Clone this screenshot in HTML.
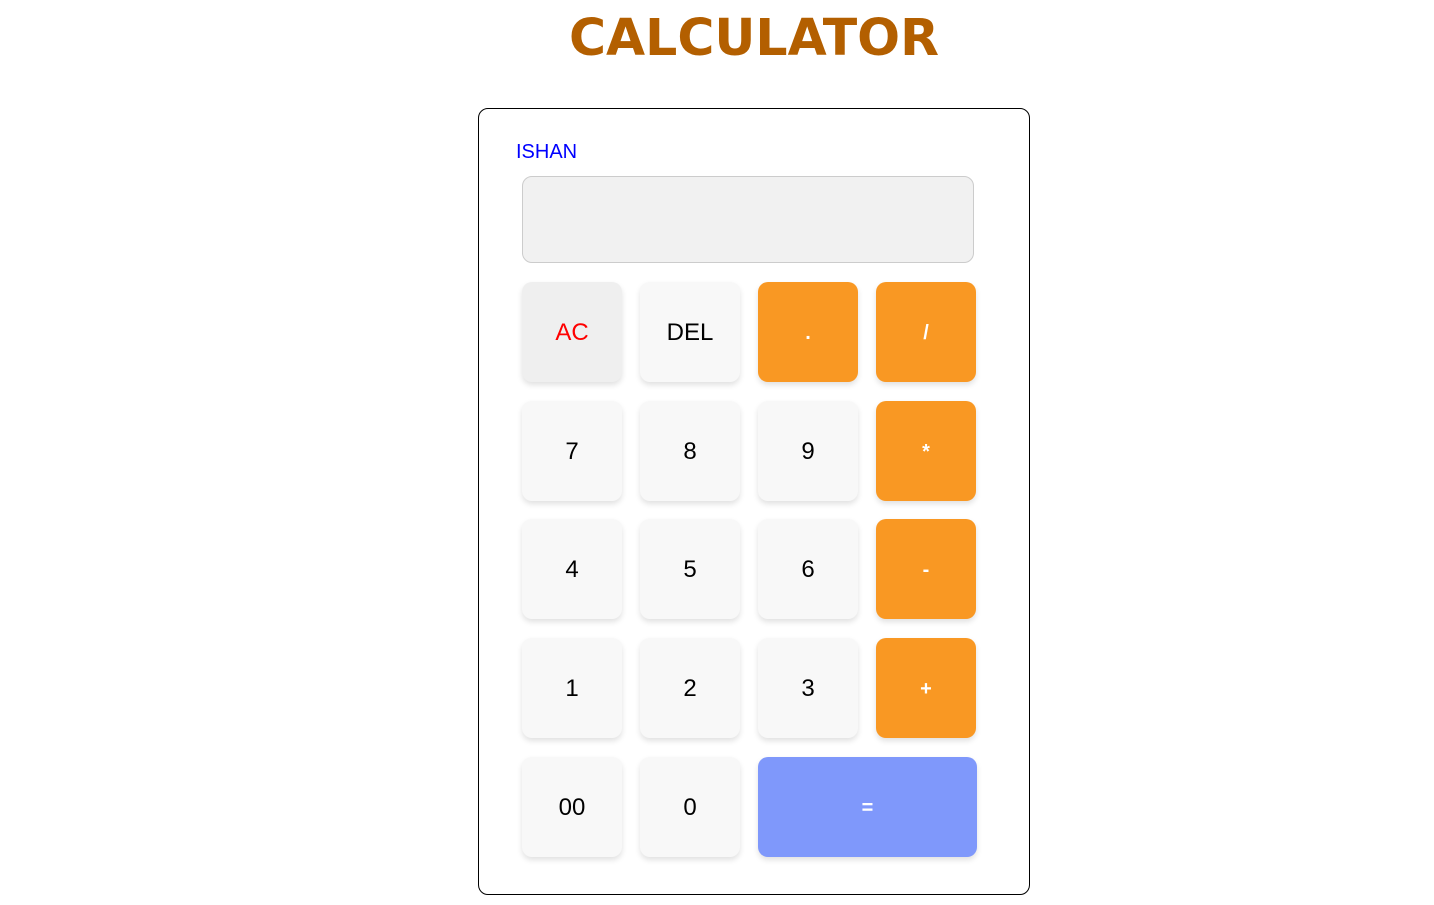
<!DOCTYPE html>
<html><head><style>
body{margin:0;background:#fff;font-family:"Liberation Sans",Arial,sans-serif;}
h1{position:absolute;left:0;width:1508px;top:1px;margin:0;text-align:center;font-family:"DejaVu Sans",Verdana,sans-serif;font-weight:bold;font-size:50.5px;line-height:74px;color:#b35f00;}
.box{position:absolute;left:478px;top:108px;width:550px;height:785px;border:1px solid #000;border-radius:10px;}
.name{position:absolute;left:516px;top:141px;font-size:20px;color:#0000ff;}
.disp{position:absolute;left:522px;top:176px;width:450px;height:85px;background:#f1f1f1;border:1px solid #ccc;border-radius:10px;}
.b{position:absolute;width:100px;height:100px;border-radius:10px;background:#f8f8f8;box-shadow:0 3px 6px rgba(0,0,0,.12);display:flex;align-items:center;justify-content:center;font-size:24px;color:#000;padding-top:2px;box-sizing:border-box;}
.o{background:#f99823;color:#fff;font-size:20px;font-weight:bold;}
</style></head><body>
<h1>CALCULATOR</h1>
<div class="box"></div>
<div class="name">ISHAN</div>
<div class="disp"></div>
<div class="b" style="left:522px;top:282px;background:#efefef;color:#f00">AC</div>
<div class="b" style="left:640px;top:282px">DEL</div>
<div class="b o" style="left:758px;top:282px">.</div>
<div class="b o" style="left:876px;top:282px">/</div>
<div class="b" style="left:522px;top:401px">7</div>
<div class="b" style="left:640px;top:401px">8</div>
<div class="b" style="left:758px;top:401px">9</div>
<div class="b o" style="left:876px;top:401px">*</div>
<div class="b" style="left:522px;top:519px">4</div>
<div class="b" style="left:640px;top:519px">5</div>
<div class="b" style="left:758px;top:519px">6</div>
<div class="b o" style="left:876px;top:519px">-</div>
<div class="b" style="left:522px;top:638px">1</div>
<div class="b" style="left:640px;top:638px">2</div>
<div class="b" style="left:758px;top:638px">3</div>
<div class="b o" style="left:876px;top:638px">+</div>
<div class="b" style="left:522px;top:757px">00</div>
<div class="b" style="left:640px;top:757px">0</div>
<div class="b o" style="left:758px;top:757px;width:219px;background:#7f98fb">=</div>
</body></html>
